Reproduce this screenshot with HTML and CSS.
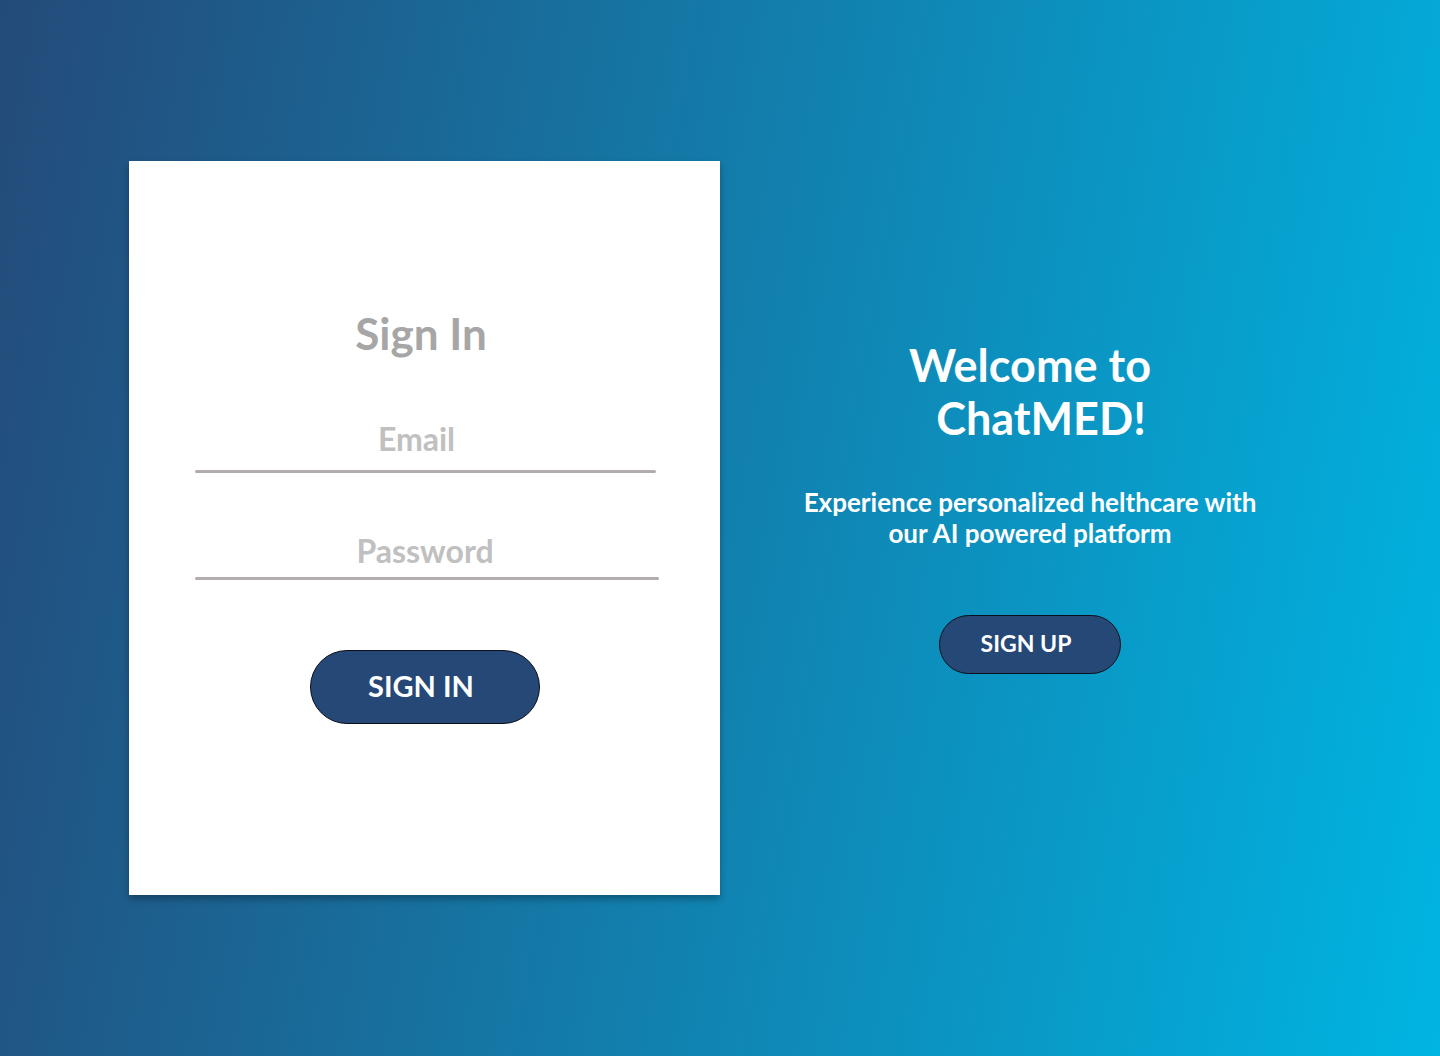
FILE: index.html
```html
<!DOCTYPE html>
<html lang="en">
<head>
<meta charset="utf-8">
<title>ChatMED - Sign In</title>
<link rel="stylesheet" href="styles.css">
</head>
<body>
<main class="page">
  <section class="card">
    <h1 class="card-title">Sign In</h1>
    <form class="form">
      <div class="field field-email">
        <input class="field-input input-email" type="email" placeholder="Email">
        <div class="field-line line-email"></div>
      </div>
      <div class="field field-password">
        <input class="field-input input-password" type="password" placeholder="Password">
        <div class="field-line line-password"></div>
      </div>
      <button class="btn btn-signin" type="button">SIGN IN</button>
    </form>
  </section>
  <section class="welcome">
    <h2 class="welcome-title">Welcome to<br><span class="welcome-offset">ChatMED!</span></h2>
    <p class="welcome-text">Experience personalized helthcare with<br>our AI powered platform</p>
    <button class="btn btn-signup" type="button">SIGN UP</button>
  </section>
</main>
</body>
</html>
```
FILE: styles.css
```css
* { box-sizing: border-box; }
html, body {
  margin: 0;
  padding: 0;
  height: 1056px;
  overflow: hidden;
}
body {
  font-family: Lato, "Open Sans", "Liberation Sans", sans-serif;
  background: linear-gradient(100deg, #244a79 0%, #00b5e2 100%);
}
.page {
  display: flex;
  align-items: flex-start;
  padding: 161px 0 0 129px;
  height: 1056px;
}
.card {
  width: 591px;
  height: 734px;
  background: #ffffff;
  box-shadow: 0 4px 7px rgba(0, 0, 0, 0.3);
  padding-top: 150px;
  display: flex;
  flex-direction: column;
}
.card-title {
  margin: 0;
  font-size: 44px;
  line-height: 44px;
  font-weight: 700;
  color: #a6a6a6;
  text-align: center;
  padding-right: 7px;
}
.form {
  display: flex;
  flex-direction: column;
  align-items: flex-start;
}
.field {
  margin-left: 66px;
  display: flex;
  flex-direction: column;
}
.field-email { margin-top: 64px; width: 461px; }
.field-password { margin-top: 58px; width: 464px; }
.field-input {
  border: none;
  outline: none;
  background: transparent;
  font-family: Lato, "Open Sans", "Liberation Sans", sans-serif;
  font-size: 32px;
  line-height: 40px;
  height: 40px;
  font-weight: 700;
  color: #8a8a8a;
  text-align: center;
  padding: 0;
  width: 100%;
}
.field-input::placeholder { color: #c0c0c0; opacity: 1; }
.input-email { padding-right: 18px; }
.input-password { padding-right: 4px; }
.field-line {
  height: 3px;
  border-radius: 2px;
  background: #b2acac;
}
.line-email { margin-top: 11px; }
.line-password { margin-top: 6px; }
.btn {
  background: #254877;
  color: #ffffff;
  border: 1px solid #0a0f1a;
  border-radius: 999px;
  font-family: Lato, "Open Sans", "Liberation Sans", sans-serif;
  font-weight: 700;
  cursor: pointer;
  display: flex;
  align-items: center;
  justify-content: center;
  padding: 0 8px 4px 0;
}
.btn-signin {
  margin: 70px 0 0 181px;
  width: 230px;
  height: 74px;
  font-size: 29px;
}
.welcome {
  width: 620px;
  display: flex;
  flex-direction: column;
  align-items: center;
  padding-top: 178px;
  color: #ffffff;
  text-align: center;
}
.welcome-title {
  margin: 0;
  font-size: 45px;
  line-height: 53px;
  font-weight: 700;
}
.welcome-offset { padding-left: 22px; }
.welcome-text {
  margin: 42px 0 0;
  font-size: 26px;
  line-height: 31px;
  font-weight: 700;
}
.btn-signup {
  margin-top: 66px;
  width: 182px;
  height: 59px;
  font-size: 23px;
}
```
